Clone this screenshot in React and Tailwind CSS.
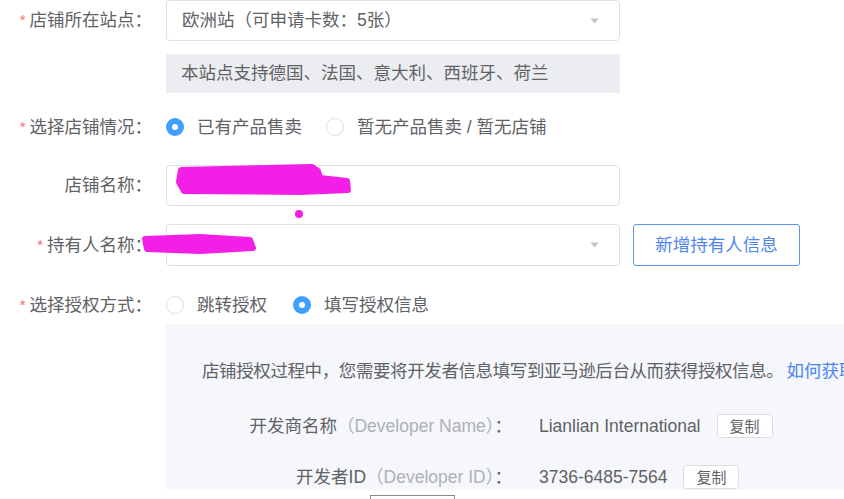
import React from 'react'

// ── Small pieces ──────────────────────────────────────────────────────────────
function Label({ required, children }) {
  return (
    <div className="w-[152px] shrink-0 text-right whitespace-nowrap">
      {required && <span className="text-[#f56c6c] text-[15px] mr-[4px] relative top-[-1px]">*</span>}
      {children}
    </div>
  )
}

function Caret() {
  return (
    <svg width="9" height="6" viewBox="0 0 9 6" className="shrink-0">
      <path d="M0.5 0.5H8.5L4.5 5.5Z" fill="#c0c4cc" />
    </svg>
  )
}

function Radio({ checked, children, className = '' }) {
  return (
    <div className={`flex items-center ${className}`}>
      {checked ? (
        <span className="w-[18px] h-[18px] rounded-full bg-[#409eff] flex items-center justify-center">
          <span className="w-[6px] h-[6px] rounded-full bg-white" />
        </span>
      ) : (
        <span className="w-[18px] h-[18px] rounded-full border border-[#dcdfe6] bg-white" />
      )}
      <span className="ml-[13px]">{children}</span>
    </div>
  )
}

function CopyButton() {
  return (
    <button className="h-[24px] px-[12px] border border-[#dcdfe6] rounded-[3px] bg-white text-[15px] leading-none text-[#606266]">
      复制
    </button>
  )
}

// ── Main component ────────────────────────────────────────────────────────────
export default function App() {
  return (
    <div className="relative w-[844px] h-[499px] overflow-hidden bg-white text-[#606266] text-[17.5px] font-['Liberation_Sans','Noto_Sans_CJK_SC',sans-serif]">

      {/* 店铺所在站点 */}
      <div className="flex items-center h-[41px]">
        <Label required>店铺所在站点：</Label>
        <div className="ml-[14px] w-[454px] h-[41px] border border-[#dcdfe6] rounded-[4px] flex items-center justify-between pl-[15px] pr-[20px]">
          <span>欧洲站（可申请卡数：5张）</span>
          <Caret />
        </div>
      </div>

      <div className="flex mt-[13px]">
        <div className="w-[166px] shrink-0" />
        <div className="w-[454px] h-[39px] bg-[#ebedf0] flex items-center pl-[15px]">
          本站点支持德国、法国、意大利、西班牙、荷兰
        </div>
      </div>

      {/* 选择店铺情况 */}
      <div className="flex items-center h-[40px] mt-[14px]">
        <Label required>选择店铺情况：</Label>
        <div className="ml-[14px] flex items-center">
          <Radio checked className="mr-[24px]">已有产品售卖</Radio>
          <Radio>暂无产品售卖 / 暂无店铺</Radio>
        </div>
      </div>

      {/* 店铺名称 */}
      <div className="flex items-center h-[41px] mt-[18px]">
        <Label>店铺名称：</Label>
        <div className="ml-[14px] w-[454px] h-[41px] border border-[#dcdfe6] rounded-[4px]" />
      </div>

      {/* 持有人名称 */}
      <div className="flex items-center h-[42px] mt-[18px]">
        <Label required>持有人名称：</Label>
        <div className="ml-[14px] w-[454px] h-[42px] border border-[#dcdfe6] rounded-[4px] flex items-center justify-end pr-[20px]">
          <Caret />
        </div>
        <button className="ml-[13px] w-[167px] h-[42px] border border-[#5b95f2] rounded-[3px] text-[#4d86ee] bg-white">
          新增持有人信息
        </button>
      </div>

      {/* 选择授权方式 */}
      <div className="flex items-center h-[38px] mt-[20px]">
        <Label required>选择授权方式：</Label>
        <div className="ml-[14px] flex items-center">
          <Radio className="mr-[26px]">跳转授权</Radio>
          <Radio checked>填写授权信息</Radio>
        </div>
      </div>

      {/* Developer info panel */}
      <div className="ml-[166px] w-[720px] bg-[#f5f7fa] pt-[33px] pb-[1px] whitespace-nowrap">
        <div className="h-[28px] flex items-center pl-[36px]">
          <span className="tracking-[-0.4px]">店铺授权过程中，您需要将开发者信息填写到亚马逊后台从而获得授权信息。</span>
          <span className="ml-[3px] text-[#4d86ee]">如何获取</span>
        </div>

        <div className="flex items-center h-[24px] mt-[29px]">
          <div className="w-[346px] shrink-0 text-right">
            开发商名称<span className="text-[#aeb1b7]">（Developer Name）</span>：
          </div>
          <span className="ml-[27px]">Lianlian International</span>
          <span className="ml-[16px] flex"><CopyButton /></span>
        </div>

        <div className="flex items-center h-[24px] mt-[27px]">
          <div className="w-[346px] shrink-0 text-right">
            开发者ID<span className="text-[#aeb1b7]">（Developer ID）</span>：
          </div>
          <span className="ml-[27px]">3736-6485-7564</span>
          <span className="ml-[16px] flex"><CopyButton /></span>
        </div>
      </div>

      <div className="ml-[370px] mt-[5px] w-[85px] h-[12px] border border-[#8c8c8c] bg-white" />

      {/* Redaction marks over the screenshot */}
      <svg className="absolute left-0 top-0 pointer-events-none" width="844" height="499">
        <g fill="#f31fe6" stroke="#f31fe6" strokeWidth="6" strokeLinecap="round" strokeLinejoin="round">
          <path d="M181 170 L312 167 L318 171 L320 178 L347 181 L348 190 L300 192 L184 191 L179 182 Z" />
          <path d="M145 239 L200 237 L250 240 L253 248 L200 251 L147 249 Z" />
        </g>
        <circle cx="299" cy="214" r="4" fill="#f31fe6" />
      </svg>
    </div>
  )
}
